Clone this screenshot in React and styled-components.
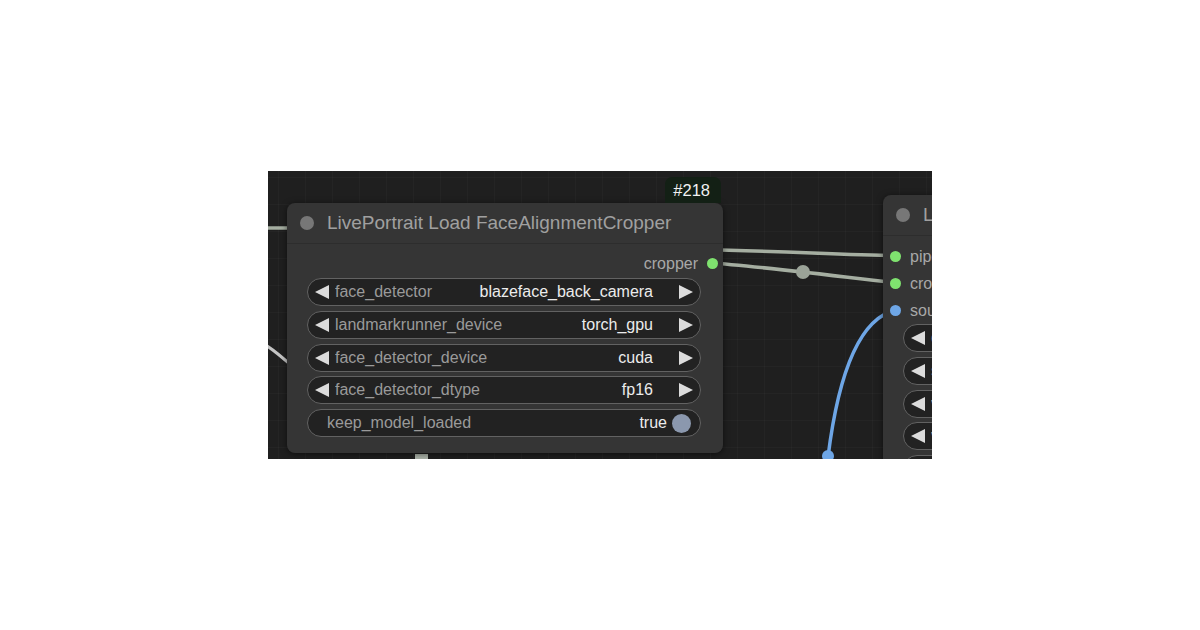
import React from "react";
import styled, { createGlobalStyle } from "styled-components";

const GlobalStyle = createGlobalStyle`
  html, body { margin: 0; padding: 0; background: #ffffff; }
  body { font-family: "Liberation Sans", Arial, sans-serif; }
  * { box-sizing: border-box; }
`;

const Page = styled.div`
  width: 1200px;
  height: 630px;
  display: flex;
  align-items: center;
  justify-content: center;
`;

const Canvas = styled.div`
  position: relative;
  width: 664px;
  height: 288px;
  overflow: hidden;
  background-color: #1f1f1f;
  background-image:
    linear-gradient(to right, rgba(255, 255, 255, 0.025) 1px, transparent 1px),
    linear-gradient(to bottom, rgba(255, 255, 255, 0.025) 1px, transparent 1px);
  background-size: 27px 27px;
  background-position: 10px 6px;
`;

const Links = styled.svg`
  position: absolute;
  left: 0;
  top: 0;
  z-index: 0;
`;

const Node = styled.div`
  position: absolute;
  left: ${(p) => p.$x}px;
  top: ${(p) => p.$y}px;
  width: ${(p) => p.$w}px;
  z-index: 1;
  background: #353535;
  border-radius: 8px;
  box-shadow: 0 1px 6px rgba(0, 0, 0, 0.55);
  display: flex;
  flex-direction: column;
`;

const Badge = styled.div`
  position: absolute;
  right: 2px;
  bottom: 100%;
  height: 26px;
  padding: 0 11px 0 8px;
  display: flex;
  align-items: center;
  background: #132015;
  border-radius: 7px 7px 0 0;
  color: #f2f2f2;
  font-size: 16.5px;
`;

const TitleBar = styled.div`
  height: 41px;
  display: flex;
  align-items: center;
  gap: 13px;
  padding-left: 13px;
  border-bottom: 1px solid #2d2d2d;
  white-space: nowrap;
`;

const TitleDot = styled.span`
  width: 14px;
  height: 14px;
  border-radius: 50%;
  background: #777777;
  flex: none;
`;

const TitleText = styled.span`
  color: #a0a0a0;
  font-size: 19px;
`;

const Body = styled.div`
  display: flex;
  flex-direction: column;
  padding: ${(p) => p.$pad};
`;

const Slots = styled.div`
  display: flex;
  flex-direction: column;
  margin: ${(p) => (p.$out ? "0 -17px 1px 0" : "0 0 0 -13px")};
`;

const SlotRow = styled.div`
  height: 27px;
  display: flex;
  align-items: center;
  justify-content: ${(p) => (p.$out ? "flex-end" : "flex-start")};
  gap: 9px;
  color: #a8a8a8;
  font-size: 16px;
  white-space: nowrap;
`;

const SlotDot = styled.span`
  width: 11px;
  height: 11px;
  border-radius: 50%;
  background: ${(p) => p.$color};
  flex: none;
`;

const Widgets = styled.div`
  display: flex;
  flex-direction: column;
  gap: 4.75px;
`;

const Widget = styled.div`
  height: 28px;
  display: flex;
  align-items: center;
  border: 1px solid #626262;
  border-radius: 14px;
  background: #222222;
  padding: ${(p) => (p.$toggle ? "0 9px 0 19px" : "0 7px")};
  font-size: 16px;
  white-space: nowrap;
`;

const Arrow = styled.svg`
  width: 14px;
  height: 14px;
  flex: none;
  fill: #dcdcdc;
`;

const Label = styled.span`
  color: #9a9a9a;
  margin-left: ${(p) => (p.$toggle ? "0" : "6px")};
  flex: 1;
  overflow: hidden;
`;

const Value = styled.span`
  color: #ececec;
  margin-right: ${(p) => (p.$toggle ? "5px" : "26px")};
`;

const Knob = styled.span`
  width: 19px;
  height: 19px;
  border-radius: 50%;
  background: #8b98ae;
  flex: none;
`;

const LeftArrow = () => (
  <Arrow viewBox="0 0 14 14">
    <polygon points="0,7 14,0 14,14" />
  </Arrow>
);

const RightArrow = () => (
  <Arrow viewBox="0 0 14 14">
    <polygon points="14,7 0,0 0,14" />
  </Arrow>
);

const Combo = ({ label, value }) => (
  <Widget>
    <LeftArrow />
    <Label>{label}</Label>
    {value && <Value>{value}</Value>}
    {value && <RightArrow />}
  </Widget>
);

const Toggle = ({ label, value }) => (
  <Widget $toggle>
    <Label $toggle>{label}</Label>
    <Value $toggle>{value}</Value>
    <Knob />
  </Widget>
);

const cropperWidgets = [
  ["face_detector", "blazeface_back_camera"],
  ["landmarkrunner_device", "torch_gpu"],
  ["face_detector_device", "cuda"],
  ["face_detector_dtype", "fp16"],
];

const processWidgets = ["dsize", "scale", "vx_ratio", "vy_ratio", "face_index"];

const WIRE = "#a5aea1";
const IMAGE_WIRE = "#6ea6e6";

export default function App() {
  return (
    <>
      <GlobalStyle />
      <Page>
        <Canvas>
          <Links width="664" height="288" viewBox="0 0 664 288">
            {/* pipeline link running behind the cropper node */}
            <path d="M -5 57 L 40 57" stroke={WIRE} strokeWidth="3.5" fill="none" />
            <path d="M 430 78.5 C 520 80, 570 84, 628 84.5" stroke={WIRE} strokeWidth="3.5" fill="none" />
            {/* cropper output -> cropper input */}
            <path d="M 442 92 C 480 94, 560 104, 628 112" stroke={WIRE} strokeWidth="3.5" fill="none" />
            <circle cx="535" cy="101" r="7" fill="#9ba398" />
            {/* incoming link on the left */}
            <path d="M -4 173 C 6 179, 14 186, 24 195" stroke="#c4c4c4" strokeWidth="3" fill="none" />
            {/* link leaving below the node */}
            <rect x="147" y="283" width="13" height="6" fill="#aab2a8" />
            {/* source image link */}
            <path d="M 628 139 C 596 146, 572 190, 560 286" stroke={IMAGE_WIRE} strokeWidth="3.5" fill="none" />
            <circle cx="560" cy="285" r="6" fill={IMAGE_WIRE} />
          </Links>

          <Node $x={19} $y={32} $w={436}>
            <Badge>#218</Badge>
            <TitleBar>
              <TitleDot />
              <TitleText>LivePortrait Load FaceAlignmentCropper</TitleText>
            </TitleBar>
            <Body $pad="6px 22px 16px 20px">
              <Slots $out>
                <SlotRow $out>
                  cropper
                  <SlotDot $color="#7fe26f" />
                </SlotRow>
              </Slots>
              <Widgets>
                {cropperWidgets.map(([l, v]) => (
                  <Combo key={l} label={l} value={v} />
                ))}
                <Toggle label="keep_model_loaded" value="true" />
              </Widgets>
            </Body>
          </Node>

          <Node $x={615} $y={24} $w={300}>
            <TitleBar>
              <TitleDot />
              <TitleText>LivePortrait Process</TitleText>
            </TitleBar>
            <Body $pad="7px 20px 16px 20px">
              <Slots>
                <SlotRow>
                  <SlotDot $color="#7fe26f" />
                  pipeline
                </SlotRow>
                <SlotRow>
                  <SlotDot $color="#7fe26f" />
                  crop_info
                </SlotRow>
                <SlotRow>
                  <SlotDot $color={IMAGE_WIRE} />
                  source_image
                </SlotRow>
              </Slots>
              <Widgets>
                {processWidgets.map((l) => (
                  <Combo key={l} label={l} value="" />
                ))}
              </Widgets>
            </Body>
          </Node>
        </Canvas>
      </Page>
    </>
  );
}
